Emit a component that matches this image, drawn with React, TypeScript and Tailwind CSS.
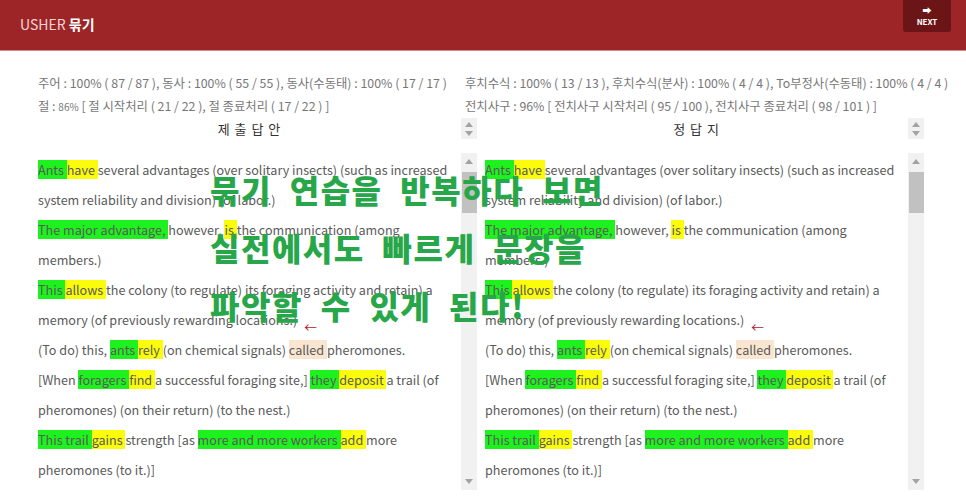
import React from 'react';

type Seg = { t: string; k?: 'g' | 'y' | 'c' };

const paras: { segs: Seg[]; arrow?: boolean }[] = [
  {
    segs: [
      { t: 'Ants ', k: 'g' },
      { t: 'have ', k: 'y' },
      { t: 'several advantages (over solitary insects) (such as increased system reliability and division) (of labor.)' },
    ],
  },
  {
    segs: [
      { t: 'The major advantage, ', k: 'g' },
      { t: 'however, ' },
      { t: 'is ', k: 'y' },
      { t: 'the communication (among members.)' },
    ],
  },
  {
    segs: [
      { t: 'This ', k: 'g' },
      { t: 'allows ', k: 'y' },
      { t: 'the colony (to regulate) its foraging activity and retain) a memory (of previously rewarding locations.)' },
    ],
    arrow: true,
  },
  {
    segs: [
      { t: '(To do) this, ' },
      { t: 'ants ', k: 'g' },
      { t: 'rely ', k: 'y' },
      { t: '(on chemical signals) ' },
      { t: 'called ', k: 'c' },
      { t: 'pheromones.' },
    ],
  },
  {
    segs: [
      { t: '[When ' },
      { t: 'foragers ', k: 'g' },
      { t: 'find ', k: 'y' },
      { t: 'a successful foraging site,] ' },
      { t: 'they ', k: 'g' },
      { t: 'deposit ', k: 'y' },
      { t: 'a trail (of pheromones) (on their return) (to the nest.)' },
    ],
  },
  {
    segs: [
      { t: 'This trail ', k: 'g' },
      { t: 'gains ', k: 'y' },
      { t: 'strength [as ' },
      { t: 'more and more workers ', k: 'g' },
      { t: 'add ', k: 'y' },
      { t: 'more pheromones (to it.)]' },
    ],
  },
  {
    segs: [
      { t: 'Other ants ', k: 'g' },
      { t: 'follow ', k: 'y' },
      { t: 'the trail (to the food source) and (back to the nest.)' },
    ],
  },
];

const segClass = (k?: Seg['k']) =>
  k === 'g' ? 'bg-[#1ef21e]' : k === 'y' ? 'bg-[#fbfb0c]' : k === 'c' ? 'bg-[#f9e5d0]' : '';

const Up = () => (
  <svg width="8" height="5" viewBox="0 0 8 5">
    <path d="M0 5 L4 0 L8 5 Z" fill="#a3a3a3" />
  </svg>
);
const Down = () => (
  <svg width="8" height="5" viewBox="0 0 8 5">
    <path d="M0 0 L4 5 L8 0 Z" fill="#a3a3a3" />
  </svg>
);

function Scrollbar() {
  return (
    <div className="w-[16px] h-[337px] bg-[#f1f1f1] flex flex-col items-center">
      <div className="h-[17px] flex items-center justify-center">
        <Up />
      </div>
      <div className="w-[15px] h-[41px] mt-[2px] bg-[#c1c1c1]" />
      <div className="flex-1" />
      <div className="h-[17px] flex items-center justify-center">
        <Down />
      </div>
    </div>
  );
}

function Passage() {
  return (
    <div className="flex">
      <div className="w-[423px] h-[337px] overflow-hidden pt-[2px] text-[12.6px] leading-[30px] text-[#5a5a5a]">
        {paras.map((p, i) => (
          <p key={i}>
            {p.segs.map((s, j) => (
              <span key={j} className={segClass(s.k)}>
                {s.t}
              </span>
            ))}
            {p.arrow && <span className="relative top-[7px] ml-[7px] text-[#b0212a]">←</span>}
          </p>
        ))}
      </div>
      <Scrollbar />
    </div>
  );
}

function Column({ title }: { title: string }) {
  return (
    <div className="w-[439px] flex flex-col">
      <div className="flex h-[22px]">
        <div className="w-[423px] text-[13px] leading-[22px] tracking-[1px] text-[#333] text-center">{title}</div>
        <div className="w-[16px] h-[21px] bg-[#f1f1f1] flex flex-col items-center justify-center gap-[4px]">
          <Up />
          <Down />
        </div>
      </div>
      <div className="mt-[13px]">
        <Passage />
      </div>
    </div>
  );
}

export default function App() {
  return (
    <div
      className="relative w-[966px] h-[497px] overflow-hidden bg-white"
      style={{ fontFamily: '"Noto Sans CJK KR", "Noto Sans", sans-serif' }}
    >
      <header className="h-[51px] bg-[#9d2527] border-b border-[#d98b8b] flex items-start justify-between pl-[20px] pr-[15px]">
        <div className="mt-[14px] text-[14px] text-[#f3d6d6]">
          USHER <span className="font-bold text-white">묶기</span>
        </div>
        <button className="w-[48px] h-[32px] bg-[#6c1517] rounded-b-[3px] flex flex-col items-center justify-center text-white">
          <span className="text-[9px] leading-[10px]">➡</span>
          <span className="text-[8px] font-bold leading-[11px]">NEXT</span>
        </button>
      </header>

      <main className="pl-[38px] pt-[21px]">
        <div className="flex text-[12.35px] leading-[23px] text-[#777]">
          <div className="w-[427px] whitespace-nowrap">
            <div>주어 : 100% ( 87 / 87 ), 동사 : 100% ( 55 / 55 ), 동사(수동태) : 100% ( 17 / 17 )</div>
            <div>
              절 : <span className="text-[10px]">86%</span> [ 절 시작처리 ( 21 / 22 ), 절 종료처리 ( 17 / 22 ) ]
            </div>
          </div>
          <div className="whitespace-nowrap">
            <div>후치수식 : 100% ( 13 / 13 ), 후치수식(분사) : 100% ( 4 / 4 ), To부정사(수동태) : 100% ( 4 / 4 )</div>
            <div>전치사구 : 96% [ 전치사구 시작처리 ( 95 / 100 ), 전치사구 종료처리 ( 98 / 101 ) ]</div>
          </div>
        </div>

        <div className="flex gap-[8px]">
          <Column title="제 출 답 안" />
          <Column title="정 답 지" />
        </div>
      </main>

      <div className="absolute left-[210px] top-[160px] text-[32px] leading-[58px] font-black text-[#28a74a] tracking-[1.5px] [word-spacing:9px] whitespace-nowrap pointer-events-none">
        <div>묶기 연습을 반복하다 보면</div>
        <div>실전에서도 빠르게 문장을</div>
        <div>파악할 수 있게 된다!</div>
      </div>
    </div>
  );
}
